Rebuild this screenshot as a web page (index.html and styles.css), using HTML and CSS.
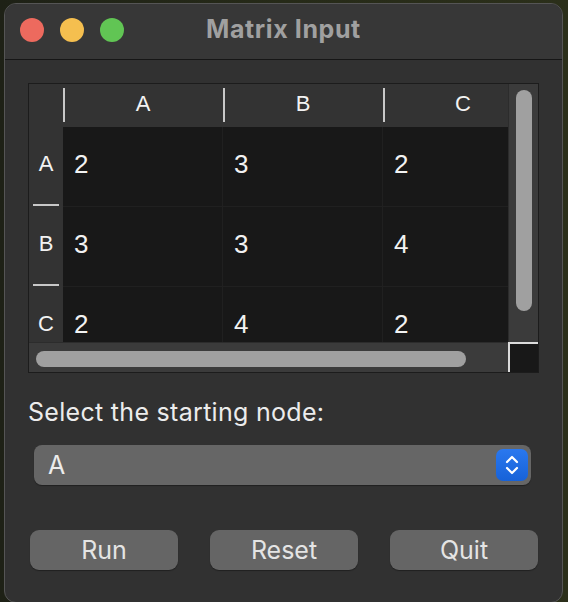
FILE: index.html
```html
<!DOCTYPE html>
<html>
<head>
<meta charset="utf-8">
<link rel="stylesheet" href="styles.css">
</head>
<body>
<div class="window">
  <div class="titlebar">
    <div class="lights">
      <span class="light red"></span>
      <span class="light yellow"></span>
      <span class="light green"></span>
    </div>
    <div class="title">Matrix Input</div>
    <div></div>
  </div>
  <div class="content">
    <div class="sheet">
      <div class="viewport">
        <div class="grid">
          <div class="corner-head"></div>
          <div class="col-head">A</div>
          <div class="col-head">B</div>
          <div class="col-head">C</div>

          <div class="row-head">A</div>
          <div class="cell">2</div>
          <div class="cell">3</div>
          <div class="cell">2</div>

          <div class="row-head">B</div>
          <div class="cell">3</div>
          <div class="cell">3</div>
          <div class="cell">4</div>

          <div class="row-head">C</div>
          <div class="cell">2</div>
          <div class="cell">4</div>
          <div class="cell">2</div>
        </div>
      </div>
      <div class="vscroll"><div class="vthumb"></div></div>
      <div class="hscroll"><div class="hthumb"></div></div>
      <div class="sheet-corner"></div>
    </div>

    <div class="label">Select the starting node:</div>

    <div class="popup">
      <span class="popup-value">A</span>
      <span class="stepper">
        <svg width="18" height="22" viewBox="0 0 18 22">
          <path d="M4 8 L9 3 L14 8" fill="none" stroke="#fff" stroke-width="2.2" stroke-linecap="round" stroke-linejoin="round"/>
          <path d="M4 14 L9 19 L14 14" fill="none" stroke="#fff" stroke-width="2.2" stroke-linecap="round" stroke-linejoin="round"/>
        </svg>
      </span>
    </div>

    <div class="buttons">
      <div class="btn">Run</div>
      <div class="btn">Reset</div>
      <div class="btn">Quit</div>
    </div>
  </div>
</div>
</body>
</html>
```
FILE: styles.css
```css
html, body {
  margin: 0;
  padding: 0;
}
body {
  width: 568px;
  height: 602px;
  overflow: hidden;
  background: linear-gradient(90deg, #1e2116 0%, #262a18 50%, #2b2f1a 100%);
  font-family: "Inter", "Liberation Sans", sans-serif;
}
.window {
  box-sizing: border-box;
  width: 559px;
  height: 600px;
  margin: 3px 0 0 4px;
  background: #313131;
  border: 1px solid #555;
  border-radius: 12px;
  overflow: hidden;
  display: flex;
  flex-direction: column;
}
.titlebar {
  height: 54px;
  flex: none;
  background: #373737;
  border-bottom: 1px solid #161616;
  display: grid;
  grid-template-columns: 1fr auto 1fr;
  align-items: center;
  padding-bottom: 1px;
  box-sizing: content-box;
}
.lights {
  display: flex;
  gap: 16px;
  padding-left: 15px;
  padding-bottom: 2px;
}
.light {
  width: 24px;
  height: 24px;
  border-radius: 50%;
}
.red { background: #ed6a5e; }
.yellow { background: #f5bf4f; }
.green { background: #61c554; }
.title {
  color: #a0a0a0;
  font-weight: 700;
  font-size: 25px;
  letter-spacing: 0.6px;
  padding-bottom: 4px;
}
.content {
  padding: 23px 0 0 23px;
  display: flex;
  flex-direction: column;
}
.sheet {
  width: 511px;
  height: 290px;
  box-sizing: border-box;
  border: 1px solid #1c1c1c;
  display: grid;
  grid-template-columns: 1fr 30px;
  grid-template-rows: 1fr 30px;
  background: #181818;
}
.viewport {
  overflow: hidden;
  min-width: 0;
  min-height: 0;
}
.grid {
  display: grid;
  grid-template-columns: 34px 160px 160px 160px;
  grid-template-rows: 43px 80px 80px 80px;
  font-family: "Liberation Sans", "Helvetica", sans-serif;
  color: #f2f2f2;
}
.corner-head {
  background: #333;
}
.col-head {
  background: #333;
  font-size: 22px;
  display: flex;
  align-items: center;
  justify-content: center;
  position: relative;
  padding-bottom: 3px;
  box-sizing: border-box;
}
.col-head::before {
  content: "";
  position: absolute;
  left: 0;
  top: 4px;
  width: 2px;
  height: 34px;
  background: #c8c8c8;
}
.row-head {
  background: #333;
  font-size: 22px;
  display: flex;
  align-items: center;
  justify-content: center;
  position: relative;
  padding-bottom: 6px;
  box-sizing: border-box;
}
.row-head::after {
  content: "";
  position: absolute;
  left: 4px;
  bottom: 1px;
  width: 26px;
  height: 2px;
  background: #c8c8c8;
}
.cell {
  background: #181818;
  border-right: 1px solid #202020;
  border-bottom: 1px solid #202020;
  font-size: 26px;
  display: flex;
  align-items: center;
  padding-left: 11px;
  padding-bottom: 4px;
  box-sizing: border-box;
}
.vscroll {
  background: #3b3b3b;
  border-left: 1px solid #2c2c2c;
  padding: 6px 0 0 7px;
  box-sizing: border-box;
}
.vthumb {
  width: 16px;
  height: 221px;
  border-radius: 8px;
  background: #a0a0a0;
}
.hscroll {
  background: #3b3b3b;
  border-top: 1px solid #2c2c2c;
  padding: 8px 0 0 7px;
  box-sizing: border-box;
}
.hthumb {
  width: 430px;
  height: 16px;
  border-radius: 8px;
  background: #a0a0a0;
}
.sheet-corner {
  background: #181818;
  border-top: 2px solid #dcdcdc;
  border-left: 2px solid #dcdcdc;
}
.label {
  margin-top: 24px;
  margin-left: 0;
  font-size: 25px;
  letter-spacing: 0.3px;
  line-height: 30px;
  color: #ececec;
}
.popup {
  margin-top: 18px;
  margin-left: 6px;
  width: 497px;
  height: 40px;
  box-sizing: border-box;
  background: #666;
  border-radius: 8px;
  box-shadow: 0 1px 1px rgba(0,0,0,0.35);
  display: flex;
  align-items: center;
  justify-content: space-between;
  padding: 0 3px 0 14px;
}
.popup-value {
  color: #ececec;
  font-size: 25px;
}
.stepper {
  width: 32px;
  height: 32px;
  border-radius: 7px;
  background: linear-gradient(#2a78ef, #1762d8);
  display: flex;
  align-items: center;
  justify-content: center;
}
.stepper svg {
  display: block;
}
.buttons {
  margin-top: 45px;
  margin-left: 2px;
  display: flex;
  gap: 32px;
}
.btn {
  width: 148px;
  height: 40px;
  box-sizing: border-box;
  background: #656565;
  border-radius: 9px;
  box-shadow: 0 1px 1px rgba(0,0,0,0.35);
  color: #e4e4e4;
  font-size: 25px;
  display: flex;
  align-items: center;
  justify-content: center;
}
```
